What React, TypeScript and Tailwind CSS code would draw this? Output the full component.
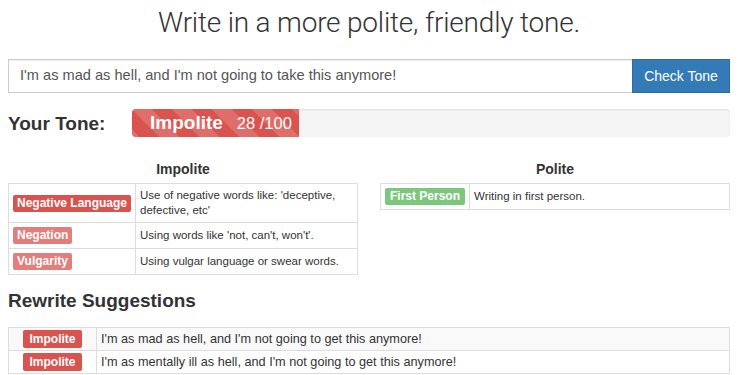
import React from 'react';

const impolite = [
  { label: 'Negative Language', desc: "Use of negative words like: 'deceptive, defective, etc'", strong: true },
  { label: 'Negation', desc: "Using words like 'not, can't, won't'.", strong: false },
  { label: 'Vulgarity', desc: 'Using vulgar language or swear words.', strong: false },
];

const polite = [{ label: 'First Person', desc: 'Writing in first person.' }];

const suggestions = [
  "I'm as mad as hell, and I'm not going to get this anymore!",
  "I'm as mentally ill as hell, and I'm not going to get this anymore!",
];

const score = 28;

export default function App() {
  return (
    <div className="w-[749px] h-[375px] overflow-hidden bg-white text-[#333] font-['Liberation_Sans',Arial,sans-serif]">
      <div className="w-[722px] ml-[8px]">
        <h1 className="h-[46px] pt-[6px] text-center text-[28px] leading-[34px] font-light font-['Roboto','Liberation_Sans',sans-serif] tracking-[-0.2px]">
          Write in a more polite, friendly tone.
        </h1>

        <div className="mt-[13px] flex h-[34px]">
          <div className="flex-1 flex items-center border border-[#ccc] border-r-0 px-[11px] text-[14.6px] text-[#555] shadow-[inset_0_1px_1px_rgba(0,0,0,0.075)]">
            I'm as mad as hell, and I'm not going to take this anymore!
          </div>
          <button className="w-[98px] bg-[#337ab7] text-white text-[14px] border border-[#2e6da4]">Check Tone</button>
        </div>

        <div className="mt-[16px] flex items-center h-[28px]">
          <div className="w-[124px] text-[19px] font-bold leading-none">Your Tone:</div>
          <div className="flex-1 h-[28px] rounded-[4px] bg-[#f5f5f5] shadow-[inset_0_1px_2px_rgba(0,0,0,0.1)] overflow-hidden flex">
            <div
              className="h-full bg-[#d9534f] bg-[linear-gradient(45deg,rgba(255,255,255,.15)_25%,transparent_25%,transparent_50%,rgba(255,255,255,.15)_50%,rgba(255,255,255,.15)_75%,transparent_75%,transparent)] bg-[length:40px_40px] flex items-center text-white whitespace-nowrap pl-[18px]"
              style={{ width: `${score}%` }}
            >
              <span className="text-[19px] font-bold">Impolite</span>
              <span className="ml-[14px] text-[16.5px]">{score} /100</span>
            </div>
          </div>
        </div>

        <div className="mt-[24px] flex justify-between">
          <div className="w-[350px]">
            <div className="text-center text-[14px] font-bold leading-[16px] mb-[6px]">Impolite</div>
            <table className="w-full border-collapse border border-[#ddd] text-[11.5px] leading-[15px]">
              <tbody>
                {impolite.map((r) => (
                  <tr key={r.label}>
                    <td className="w-[126px] border border-[#ddd] px-[4px] py-[4px] align-middle">
                      <span
                        className={
                          'block w-fit whitespace-nowrap px-[4px] h-[17px] leading-[17px] text-[12px] font-bold text-white rounded-[2px] ' +
                          (r.strong ? 'bg-[#d9534f]' : 'bg-[#e37e7b]')
                        }
                      >
                        {r.label}
                      </span>
                    </td>
                    <td className="border border-[#ddd] px-[4px] py-[4px] align-middle">{r.desc}</td>
                  </tr>
                ))}
              </tbody>
            </table>
          </div>
          <div className="w-[350px]">
            <div className="text-center text-[14px] font-bold leading-[16px] mb-[6px]">Polite</div>
            <table className="w-full border-collapse border border-[#ddd] text-[11.5px] leading-[15px]">
              <tbody>
                {polite.map((r) => (
                  <tr key={r.label}>
                    <td className="w-[88px] border border-[#ddd] px-[4px] py-[4px] align-middle">
                      <span className="block w-fit whitespace-nowrap px-[5px] h-[17px] leading-[17px] text-[12px] font-bold text-white rounded-[2px] bg-[#7dc67d]">
                        {r.label}
                      </span>
                    </td>
                    <td className="border border-[#ddd] px-[4px] py-[4px] align-middle">{r.desc}</td>
                  </tr>
                ))}
              </tbody>
            </table>
          </div>
        </div>

        <h2 className="mt-[14px] text-[19px] font-bold leading-[24px]">Rewrite Suggestions</h2>

        <table className="mt-[14px] w-full border-collapse border border-[#ddd] text-[12.7px] leading-[15px]">
          <tbody>
            {suggestions.map((s, i) => (
              <tr key={i} className={i % 2 === 0 ? 'bg-[#f9f9f9]' : 'bg-white'}>
                <td className="w-[88px] border border-[#ddd] px-[4px] py-[2px] align-middle">
                  <span className="block w-fit mx-auto whitespace-nowrap px-[6px] h-[18px] leading-[18px] text-[12px] font-bold text-white rounded-[2px] bg-[#d9534f]">
                    Impolite
                  </span>
                </td>
                <td className="border border-[#ddd] px-[4px] py-[2px] align-middle">{s}</td>
              </tr>
            ))}
          </tbody>
        </table>
      </div>
    </div>
  );
}
